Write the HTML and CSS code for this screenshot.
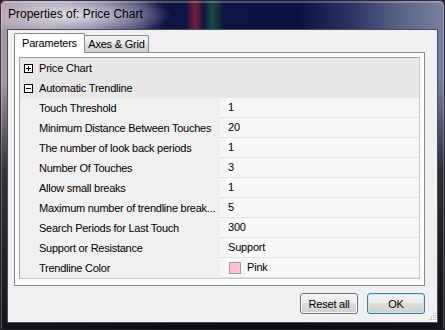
FILE: index.html
```html
<!DOCTYPE html>
<html lang="en">
<head>
  <meta charset="UTF-8">
  <title>Properties of: Price Chart</title>
  <link rel="stylesheet" href="styles.css">
</head>
<body>

  <div class="window">
    <div class="titlebar">
      <span class="title">Properties of: Price Chart</span>
    </div>

    <div class="client">
      <div class="tabs">
        <div class="tab active">Parameters</div>
        <div class="tab">Axes &amp; Grid</div>
      </div>

      <div class="tab-page">
        <div class="grid">
          <div class="category">
            <svg class="toggle" width="9" height="9" viewBox="0 0 9 9"><rect x="0.5" y="0.5" width="8" height="8" fill="#fff" stroke="#000"/><path d="M2 4.5h5M4.5 2v5" stroke="#000"/></svg>
            <span>Price Chart</span>
          </div>
          <div class="category">
            <svg class="toggle" width="9" height="9" viewBox="0 0 9 9"><rect x="0.5" y="0.5" width="8" height="8" fill="#fff" stroke="#000"/><path d="M2 4.5h5" stroke="#000"/></svg>
            <span>Automatic Trendline</span>
          </div>

          <div class="prop"><div class="name">Touch Threshold</div><div class="value">1</div></div>
          <div class="prop"><div class="name">Minimum Distance Between Touches</div><div class="value">20</div></div>
          <div class="prop"><div class="name">The number of look back periods</div><div class="value">1</div></div>
          <div class="prop"><div class="name">Number Of Touches</div><div class="value">3</div></div>
          <div class="prop"><div class="name">Allow small breaks</div><div class="value">1</div></div>
          <div class="prop"><div class="name">Maximum number of trendline break...</div><div class="value">5</div></div>
          <div class="prop"><div class="name">Search Periods for Last Touch</div><div class="value">300</div></div>
          <div class="prop"><div class="name">Support or Resistance</div><div class="value">Support</div></div>
          <div class="prop"><div class="name">Trendline Color</div><div class="value"><span class="swatch"></span>Pink</div></div>
        </div>
      </div>

      <div class="buttons">
        <button class="btn">Reset all</button>
        <button class="btn default">OK</button>
      </div>

      <!-- resize grip -->
      <svg class="grip" width="10" height="10" viewBox="0 0 10 10">
        <g fill="#a8a8a8">
          <rect x="8" y="2" width="1" height="1"/>
          <rect x="6" y="4" width="1" height="1"/><rect x="8" y="4" width="1" height="1"/>
          <rect x="4" y="6" width="1" height="1"/><rect x="6" y="6" width="1" height="1"/><rect x="8" y="6" width="1" height="1"/>
          <rect x="2" y="8" width="1" height="1"/><rect x="4" y="8" width="1" height="1"/><rect x="6" y="8" width="1" height="1"/><rect x="8" y="8" width="1" height="1"/>
        </g>
        <g fill="#fff">
          <rect x="9" y="3" width="1" height="1"/>
          <rect x="7" y="5" width="1" height="1"/><rect x="9" y="5" width="1" height="1"/>
          <rect x="5" y="7" width="1" height="1"/><rect x="7" y="7" width="1" height="1"/><rect x="9" y="7" width="1" height="1"/>
          <rect x="3" y="9" width="1" height="1"/><rect x="5" y="9" width="1" height="1"/><rect x="7" y="9" width="1" height="1"/><rect x="9" y="9" width="1" height="1"/>
        </g>
      </svg>
    </div>
  </div>

</body>
</html>
```

FILE: styles.css
```css
body {
  margin: 0;
  background: #2a1c2c;
  font-family: 'Liberation Sans', Arial, sans-serif;
  font-size: 11px;
  letter-spacing: -0.2px;
  color: #000;
}

.window {
  width: 445px;
  height: 330px;
  box-sizing: border-box;
  display: flex;
  flex-direction: column;
  border-radius: 6px 6px 3px 3px;
  box-shadow: inset 0 0 0 1px rgba(20,20,30,0.8), inset 0 1px 0 2px rgba(255,255,255,0.25);
  background:
    linear-gradient(to bottom, rgba(0,0,0,0) 0, rgba(0,0,0,0) 80px, rgba(18,18,20,0.75) 170px, rgba(12,12,14,0.95) 330px),
    radial-gradient(ellipse 100px 22px at 72px 15px, rgba(232,226,234,0.95), rgba(232,226,234,0)),
    linear-gradient(to right, transparent 186px, rgba(150,35,50,0.75) 195px, transparent 204px) 0 0 / 100% 29px no-repeat,
    linear-gradient(to right, transparent 203px, rgba(35,110,60,0.6) 212px, transparent 224px) 0 0 / 100% 29px no-repeat,
    linear-gradient(to right, #a698a6 0, #9890a4 50px, #3a3f6a 140px, #0e1444 165px, #0c1242 300px, #2c3262 350px, #5c6288 400px, #7a809e 445px);
}

.titlebar {
  height: 29px;
  flex: none;
  padding-left: 8px;
  display: flex;
  align-items: center;
}

.title {
  font-size: 12px;
  letter-spacing: 0;
  color: #000;
  margin-top: -1px;
}

.client {
  position: relative;
  flex: 1;
  margin: 0 7px 7px 7px;
  background: #f0f0f0;
  border: 1px solid #4a4e5e;
  display: flex;
  flex-direction: column;
}

.tabs {
  display: flex;
  align-items: flex-end;
  padding: 3px 0 0 6px;
  height: 19px;
  position: relative;
  z-index: 1;
}

.tab {
  width: 65px;
  height: 17px;
  box-sizing: border-box;
  padding-top: 2px;
  margin-left: -1px;
  border: 1px solid #898c95;
  border-bottom: none;
  border-radius: 2px 2px 0 0;
  background: linear-gradient(#f2f2f2 0%, #ebebeb 50%, #dddddd 50%, #cfcfcf 100%);
  line-height: 13px;
  text-align: center;
}

.tab.active {
  height: 20px;
  width: 71px;
  margin-left: 0;
  margin-bottom: -1px;
  padding-top: 3px;
  background: #fff;
}

.tab-page {
  height: 234px;
  box-sizing: border-box;
  margin: 0 12px 0 6px;
  padding: 4px;
  border: 1px solid #898c95;
  background: #fff;
}

.grid {
  border: 1px solid #a0a0a0;
  border-right-color: #c8c8c8;
  border-bottom-color: #c8c8c8;
  background: #f0f0f0;
  height: 222px;
  box-sizing: border-box;
}

.category {
  height: 20px;
  display: flex;
  align-items: center;
  background: #e8e8e8;
  padding-left: 4px;
}

.toggle {
  margin-right: 6px;
}

.prop {
  height: 20px;
  display: grid;
  grid-template-columns: 200px 1fr;
}

.name {
  padding-left: 19px;
  line-height: 20px;
  letter-spacing: -0.25px;
  white-space: nowrap;
  overflow: hidden;
}

.value {
  background: #f7f7f7;
  border-bottom: 1px solid #e4e4e4;
  padding-left: 8px;
  line-height: 19px;
  display: flex;
  align-items: center;
}

.swatch {
  width: 10px;
  height: 10px;
  border: 1px solid #a0a0a0;
  background: #ffc0cb;
  margin: 0 6px 0 1px;
}

.buttons {
  display: flex;
  justify-content: flex-end;
  gap: 9px;
  margin-top: 7px;
  padding-right: 12px;
}

.btn {
  width: 58px;
  height: 21px;
  padding: 0;
  font-family: 'Liberation Sans', Arial, sans-serif;
  font-size: 11px;
  letter-spacing: -0.2px;
  color: #000;
  border: 1px solid #707070;
  border-radius: 3px;
  background: linear-gradient(#f2f2f2 0%, #ebebeb 50%, #dddddd 50%, #cfcfcf 100%);
  box-shadow: inset 0 0 0 1px #fbfbfb;
}

.btn.default {
  border-color: #3c7fb1;
  box-shadow: inset 0 0 0 1px #c4e5f6;
}

.grip {
  position: absolute;
  right: 0;
  bottom: 1px;
}
```
